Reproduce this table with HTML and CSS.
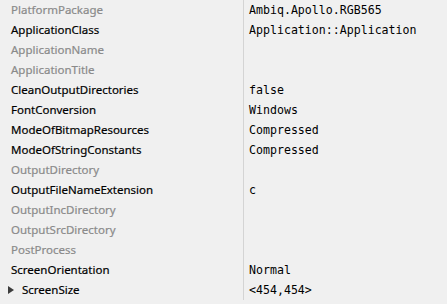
FILE: index.html
```html
<!DOCTYPE html>
<html lang="en">
<head>
    <meta charset="UTF-8">
    <title>Properties</title>
    <link rel="stylesheet" href="styles.css">
</head>
<body>
    <div class="grid">
        <div class="row muted"><span class="name">PlatformPackage</span><span class="value">Ambiq.Apollo.RGB565</span></div>
        <div class="row"><span class="name">ApplicationClass</span><span class="value">Application::Application</span></div>
        <div class="row muted"><span class="name">ApplicationName</span><span class="value"></span></div>
        <div class="row muted"><span class="name">ApplicationTitle</span><span class="value"></span></div>
        <div class="row"><span class="name">CleanOutputDirectories</span><span class="value">false</span></div>
        <div class="row"><span class="name">FontConversion</span><span class="value">Windows</span></div>
        <div class="row"><span class="name">ModeOfBitmapResources</span><span class="value">Compressed</span></div>
        <div class="row"><span class="name">ModeOfStringConstants</span><span class="value">Compressed</span></div>
        <div class="row muted"><span class="name">OutputDirectory</span><span class="value"></span></div>
        <div class="row"><span class="name">OutputFileNameExtension</span><span class="value">c</span></div>
        <div class="row muted"><span class="name">OutputIncDirectory</span><span class="value"></span></div>
        <div class="row muted"><span class="name">OutputSrcDirectory</span><span class="value"></span></div>
        <div class="row muted"><span class="name">PostProcess</span><span class="value"></span></div>
        <div class="row"><span class="name">ScreenOrientation</span><span class="value">Normal</span></div>
        <div class="row group"><span class="name"><span class="arrow"></span>ScreenSize</span><span class="value">&lt;454,454&gt;</span></div>
    </div>
</body>
</html>
```

FILE: styles.css
```css
html, body {
    margin: 0;
    background-color: #f0f0f0;
}

.grid {
    width: 447px;
}

.row {
    display: flex;
    height: 20px;
    align-items: center;
}

/* property name column, split from the values by a thin line */
.name {
    box-sizing: border-box;
    width: 244px;
    height: 100%;
    padding-left: 11px;
    padding-bottom: 1px;
    display: flex;
    align-items: center;
    font-family: "Noto Sans", sans-serif;
    font-size: 11.5px;
    color: #000;
    -webkit-text-stroke: 0.2px #000;
    border-right: 1px solid #d4d4d4;
}

/* properties with default values are greyed out */
.muted .name {
    color: #8a8a8a;
    -webkit-text-stroke: 0.2px #8a8a8a;
}

.value {
    padding-left: 5px;
    font-family: "DejaVu Sans Mono", monospace;
    font-size: 11.6px;
    color: #000;
}

.group .name {
    padding-left: 8px;
}

/* collapsed expander */
.arrow {
    width: 0;
    height: 0;
    border-top: 4.5px solid transparent;
    border-bottom: 4.5px solid transparent;
    border-left: 6px solid #3c3c3c;
    margin-right: 8px;
}
```
